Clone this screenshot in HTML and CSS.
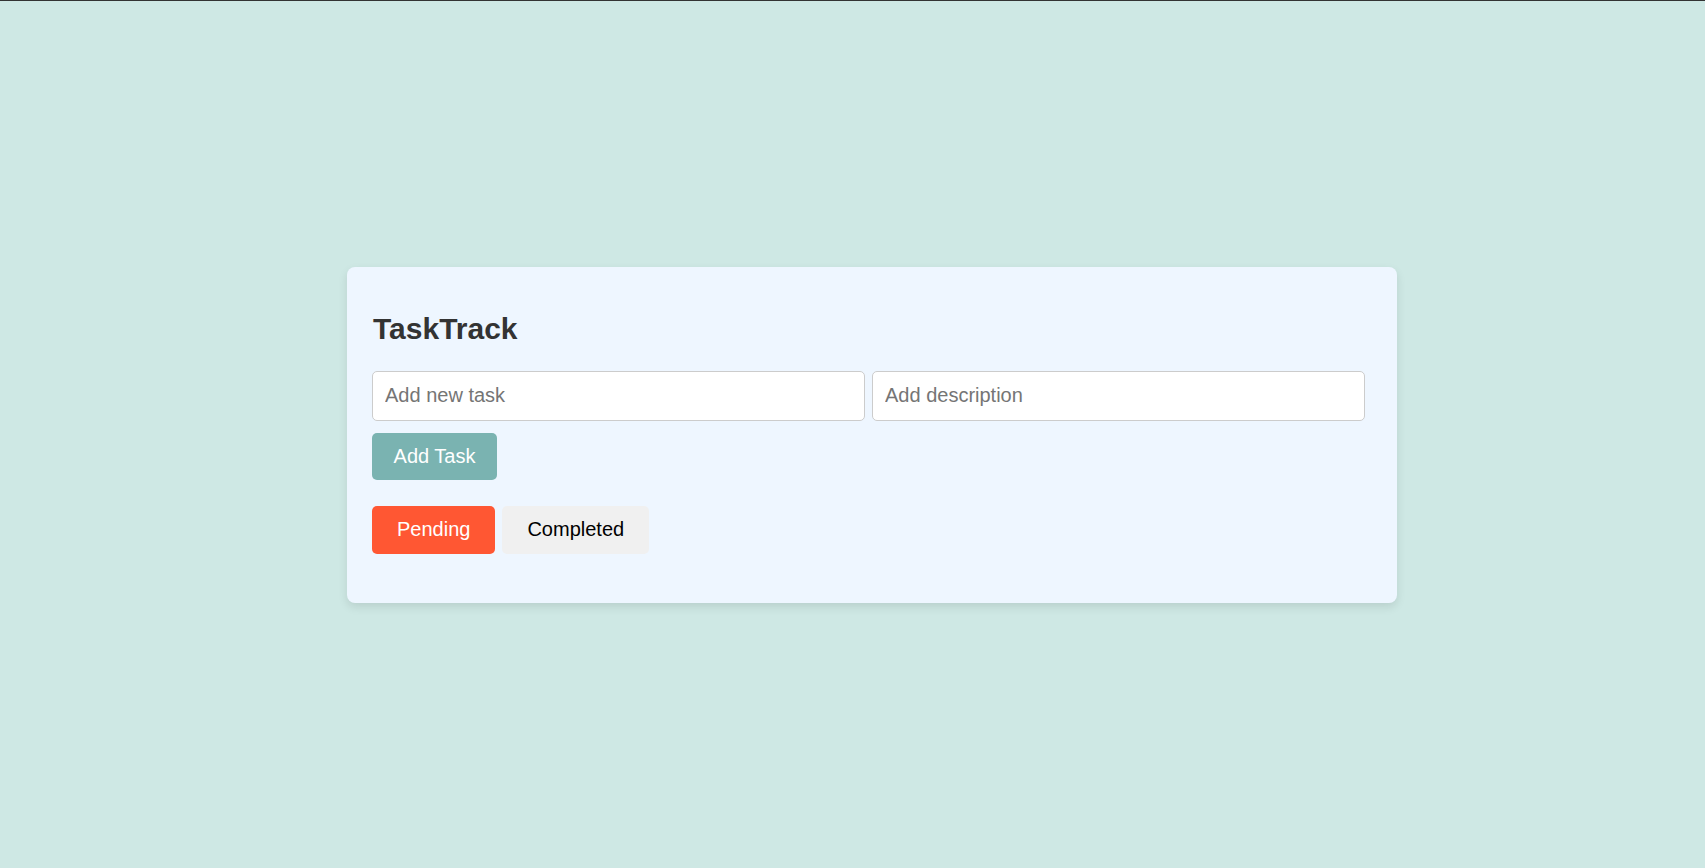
FILE: index.html
```html
<!DOCTYPE html>
<html lang="en">
<head>
<meta charset="utf-8">
<title>TaskTrack</title>
<link rel="stylesheet" href="styles.css">
</head>
<body>
<div class="topline"></div>
<main class="stage">
  <section class="card">
    <h1 class="title">TaskTrack</h1>
    <div class="inputs">
      <input class="field" type="text" placeholder="Add new task">
      <input class="field" type="text" placeholder="Add description">
    </div>
    <button class="add-btn">Add Task</button>
    <div class="tabs">
      <button class="tab tab-active">Pending</button>
      <button class="tab">Completed</button>
    </div>
  </section>
</main>
</body>
</html>
```

FILE: styles.css
```css
* { box-sizing: border-box; }

html, body {
  margin: 0;
  padding: 0;
}

body {
  background: #cee8e4;
  font-family: "Liberation Sans", Arial, sans-serif;
  min-height: 868px;
  display: flex;
  flex-direction: column;
}

.topline {
  height: 1px;
  background: #333333;
}

.stage {
  flex: 1;
  display: flex;
  align-items: center;
  padding: 0 308px 0 347px;
}

.card {
  width: 1050px;
  background: #eef6ff;
  border-radius: 8px;
  box-shadow: 0 4px 10px rgba(0, 0, 0, 0.1);
  padding: 25px;
  display: flex;
  flex-direction: column;
  align-items: flex-start;
}

.title {
  margin: 20px 0 26px 1px;
  font-size: 30px;
  line-height: 33px;
  font-weight: bold;
  color: #333333;
}

.inputs {
  display: flex;
  gap: 7px;
}

.field {
  width: 493px;
  height: 50px;
  padding: 0 12px;
  border: 1px solid #cccccc;
  border-radius: 5px;
  background: #ffffff;
  font-family: "Liberation Sans", Arial, sans-serif;
  font-size: 20px;
  color: #333333;
  outline: none;
}

.field::placeholder {
  color: #757575;
}

.add-btn {
  margin-top: 12px;
  height: 47px;
  width: 125px;
  border: none;
  border-radius: 5px;
  background: #7ab3b1;
  color: #ffffff;
  font-family: "Liberation Sans", Arial, sans-serif;
  font-size: 20px;
  padding: 0;
  cursor: pointer;
}

.tabs {
  margin-top: 26px;
  margin-bottom: 24px;
  display: flex;
  gap: 7px;
}

.tab {
  height: 48px;
  padding: 0 25px;
  border: none;
  border-radius: 5px;
  background: #f0f0f0;
  color: #000000;
  font-family: "Liberation Sans", Arial, sans-serif;
  font-size: 20px;
  cursor: pointer;
}

.tab-active {
  background: #ff5733;
  color: #ffffff;
}
```
